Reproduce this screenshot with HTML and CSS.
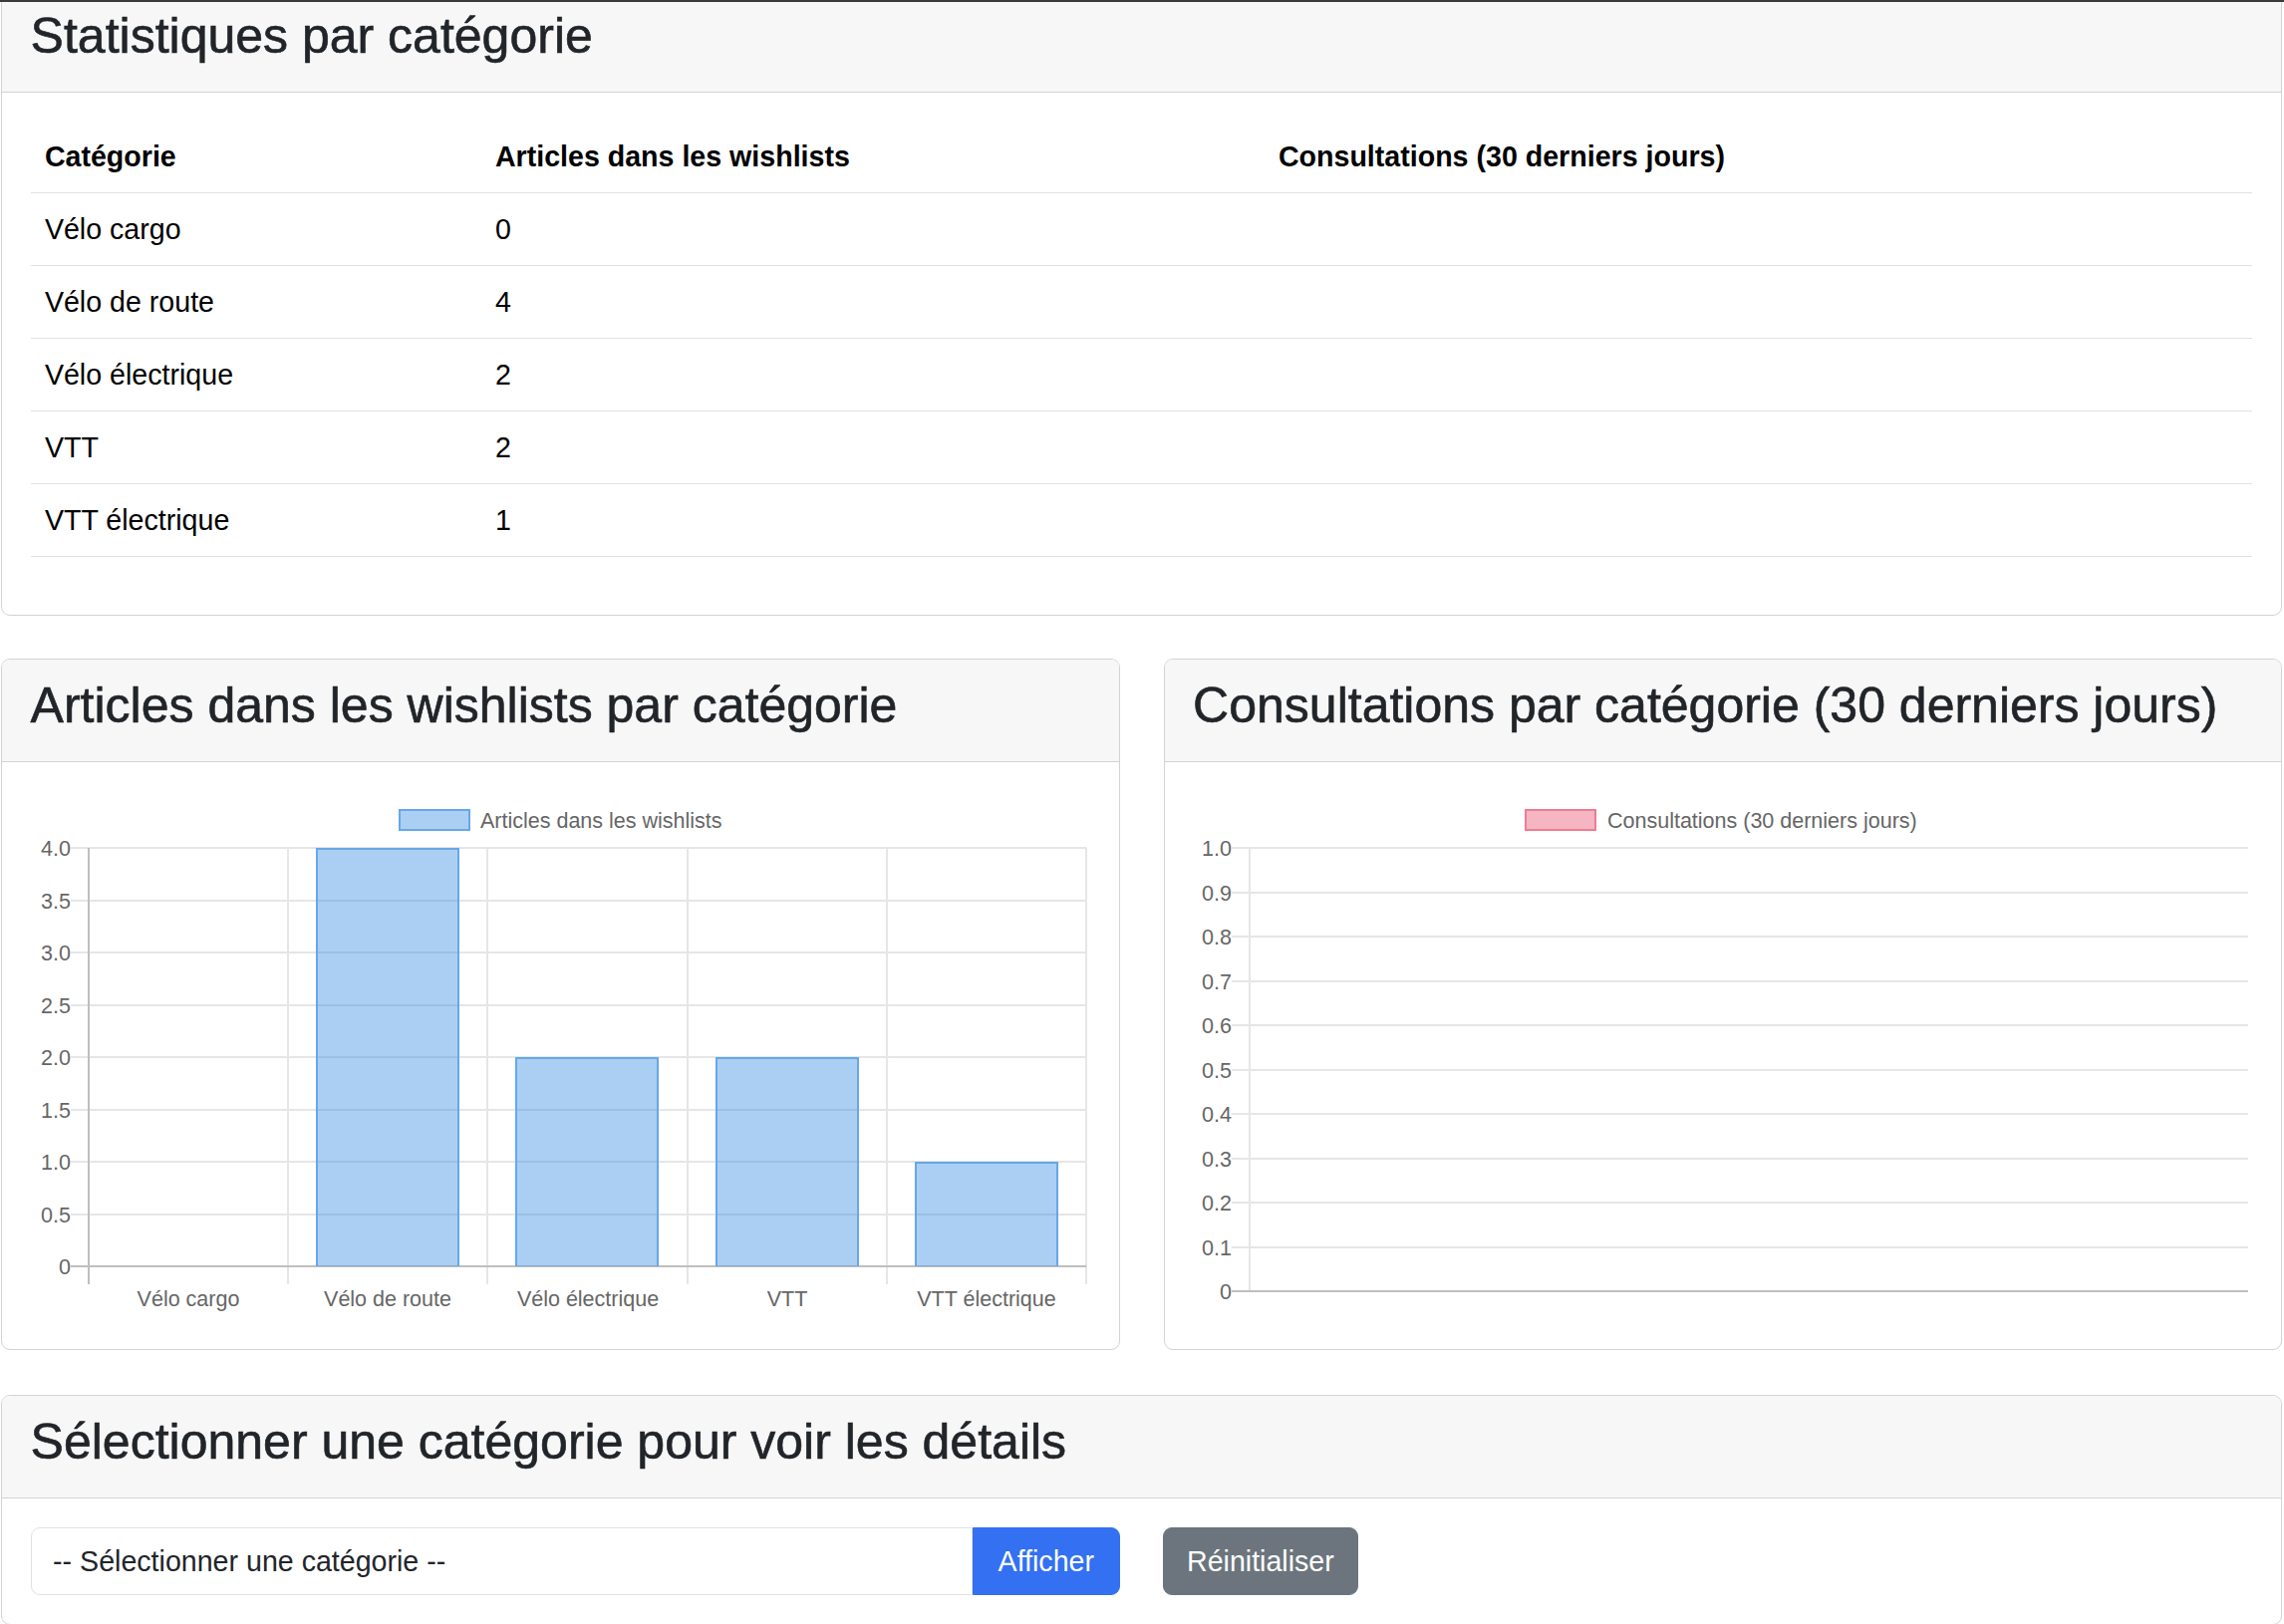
FILE: index.html
```html
<!DOCTYPE html>
<html lang="fr">
<head>
<meta charset="utf-8">
<title>Statistiques par catégorie</title>
<link rel="stylesheet" href="styles.css">
</head>
<body>
<div class="topline"></div>
<main class="page">
  <section class="card card-first">
    <div class="card-header"><h3>Statistiques par catégorie</h3></div>
    <div class="card-body">
      <table class="table">
        <thead>
          <tr><th class="c1">Catégorie</th><th class="c2">Articles dans les wishlists</th><th>Consultations (30 derniers jours)</th></tr>
        </thead>
        <tbody>
          <tr><td>Vélo cargo</td><td>0</td><td></td></tr>
          <tr><td>Vélo de route</td><td>4</td><td></td></tr>
          <tr><td>Vélo électrique</td><td>2</td><td></td></tr>
          <tr><td>VTT</td><td>2</td><td></td></tr>
          <tr><td>VTT électrique</td><td>1</td><td></td></tr>
        </tbody>
      </table>
    </div>
  </section>

  <div class="chart-row">
    <section class="card">
      <div class="card-header"><h3>Articles dans les wishlists par catégorie</h3></div>
      <div class="card-body">
        <svg class="chart" width="1063" height="531" xmlns="http://www.w3.org/2000/svg">
          <g class="legend">
            <rect x="370" y="19" width="70" height="20" fill="#aacff2" stroke="#66a7e9" stroke-width="2"/>
            <text x="451" y="30" class="lbl" dominant-baseline="central">Articles dans les wishlists</text>
          </g>
          <g stroke="#e6e6e6" stroke-width="2">
            <line x1="40" y1="57" x2="1059" y2="57"/>
            <line x1="40" y1="110" x2="1059" y2="110"/>
            <line x1="40" y1="162" x2="1059" y2="162"/>
            <line x1="40" y1="215" x2="1059" y2="215"/>
            <line x1="40" y1="267" x2="1059" y2="267"/>
            <line x1="40" y1="320" x2="1059" y2="320"/>
            <line x1="40" y1="372" x2="1059" y2="372"/>
            <line x1="40" y1="425" x2="1059" y2="425"/>
            <line x1="258" y1="57" x2="258" y2="495"/>
            <line x1="458" y1="57" x2="458" y2="495"/>
            <line x1="659" y1="57" x2="659" y2="495"/>
            <line x1="859" y1="57" x2="859" y2="495"/>
            <line x1="1059" y1="57" x2="1059" y2="495"/>
          </g>
          <g stroke="#bfbfbf" stroke-width="2">
            <line x1="58" y1="57" x2="58" y2="495"/>
            <line x1="40" y1="477" x2="1059" y2="477"/>
          </g>
          <g class="bars">
            <rect x="286" y="57" width="144" height="420" fill="rgba(54,140,225,0.42)"/>
            <path d="M287 477 V58 H429 V477" fill="none" stroke="#66a7e9" stroke-width="2"/>
            <rect x="486" y="267" width="144" height="210" fill="rgba(54,140,225,0.42)"/>
            <path d="M487 477 V268 H629 V477" fill="none" stroke="#66a7e9" stroke-width="2"/>
            <rect x="687" y="267" width="144" height="210" fill="rgba(54,140,225,0.42)"/>
            <path d="M688 477 V268 H830 V477" fill="none" stroke="#66a7e9" stroke-width="2"/>
            <rect x="887" y="372" width="144" height="105" fill="rgba(54,140,225,0.42)"/>
            <path d="M888 477 V373 H1030 V477" fill="none" stroke="#66a7e9" stroke-width="2"/>
          </g>
          <g class="lbl" text-anchor="end" dominant-baseline="central">
            <text x="40" y="58">4.0</text>
            <text x="40" y="111">3.5</text>
            <text x="40" y="163">3.0</text>
            <text x="40" y="216">2.5</text>
            <text x="40" y="268">2.0</text>
            <text x="40" y="321">1.5</text>
            <text x="40" y="373">1.0</text>
            <text x="40" y="426">0.5</text>
            <text x="40" y="478">0</text>
          </g>
          <g class="lbl" text-anchor="middle" dominant-baseline="central">
            <text x="158" y="510">Vélo cargo</text>
            <text x="358" y="510">Vélo de route</text>
            <text x="559" y="510">Vélo électrique</text>
            <text x="759" y="510">VTT</text>
            <text x="959" y="510">VTT électrique</text>
          </g>
        </svg>
      </div>
    </section>

    <section class="card">
      <div class="card-header"><h3>Consultations par catégorie (30 derniers jours)</h3></div>
      <div class="card-body">
        <svg class="chart" width="1063" height="531" xmlns="http://www.w3.org/2000/svg">
          <g class="legend">
            <rect x="334" y="19" width="70" height="20" fill="#f6b5c2" stroke="#ee7c93" stroke-width="2"/>
            <text x="416" y="30" class="lbl" dominant-baseline="central">Consultations (30 derniers jours)</text>
          </g>
          <g stroke="#e6e6e6" stroke-width="2">
            <line x1="39" y1="57" x2="1059" y2="57"/>
            <line x1="39" y1="102" x2="1059" y2="102"/>
            <line x1="39" y1="146" x2="1059" y2="146"/>
            <line x1="39" y1="191" x2="1059" y2="191"/>
            <line x1="39" y1="235" x2="1059" y2="235"/>
            <line x1="39" y1="280" x2="1059" y2="280"/>
            <line x1="39" y1="324" x2="1059" y2="324"/>
            <line x1="39" y1="369" x2="1059" y2="369"/>
            <line x1="39" y1="413" x2="1059" y2="413"/>
            <line x1="39" y1="458" x2="1059" y2="458"/>
            <line x1="57" y1="57" x2="57" y2="502"/>
          </g>
          <line x1="39" y1="502" x2="1059" y2="502" stroke="#bfbfbf" stroke-width="2"/>
          <g class="lbl" text-anchor="end" dominant-baseline="central">
            <text x="39" y="58">1.0</text>
            <text x="39" y="103">0.9</text>
            <text x="39" y="147">0.8</text>
            <text x="39" y="192">0.7</text>
            <text x="39" y="236">0.6</text>
            <text x="39" y="281">0.5</text>
            <text x="39" y="325">0.4</text>
            <text x="39" y="370">0.3</text>
            <text x="39" y="414">0.2</text>
            <text x="39" y="459">0.1</text>
            <text x="39" y="503">0</text>
          </g>
        </svg>
      </div>
    </section>
  </div>

  <section class="card card-last">
    <div class="card-header"><h3>Sélectionner une catégorie pour voir les détails</h3></div>
    <div class="card-body">
      <div class="form-row">
        <div class="input-group">
          <select class="form-select">
            <option>-- Sélectionner une catégorie --</option>
            <option>Vélo cargo</option>
            <option>Vélo de route</option>
            <option>Vélo électrique</option>
            <option>VTT</option>
            <option>VTT électrique</option>
          </select>
          <button class="btn btn-primary" type="button">Afficher</button>
        </div>
        <div>
          <button class="btn btn-secondary" type="button">Réinitialiser</button>
        </div>
      </div>
    </div>
  </section>
</main>
</body>
</html>
```

FILE: styles.css
```css
* {
  box-sizing: border-box;
}

html,
body {
  margin: 0;
  padding: 0;
  background: #fff;
  overflow: hidden;
}

body {
  font-family: "Liberation Sans", Arial, Helvetica, sans-serif;
  font-size: 28.6px;
  line-height: 1.5;
  color: #212529;
}

.topline {
  position: fixed;
  top: 0;
  left: 0;
  right: 0;
  height: 2px;
  background: #3a3a3c;
  z-index: 10;
}

.page {
  padding: 0 2px 0 1px;
  margin-top: -12px;
}

.card {
  border: 1px solid #d3d3d3;
  border-radius: 9px;
  background: #fff;
  overflow: hidden;
  margin-bottom: 43px;
}

.card-header {
  background: #f7f7f7;
  border-bottom: 1px solid #d3d3d3;
  padding: 16.5px 28.6px 14.3px;
}

.card-header h3 {
  margin: 0 0 12.1px;
  font-size: 50px;
  font-weight: 400;
  line-height: 1.2;
  color: #212529;
  -webkit-text-stroke: 0.6px #212529;
}

.card-body {
  padding: 28.6px;
}

.table {
  width: 100%;
  border-collapse: collapse;
  table-layout: fixed;
  margin-bottom: 29px;
  color: #000;
}

.table th,
.table td {
  padding: 14.5px 14.3px 14.5px;
  line-height: 42.9px;
  border-bottom: 1px solid #dee2e6;
  text-align: left;
  vertical-align: top;
}

.table th {
  font-weight: 700;
}

.c1 {
  width: 452px;
}

.c2 {
  width: 786px;
}

.chart-row {
  display: grid;
  grid-template-columns: 1fr 1fr;
  gap: 44px;
  margin-bottom: 45px;
}

.chart-row .card {
  margin-bottom: 0;
}

.chart {
  display: block;
}

.lbl {
  font-family: "Liberation Sans", Arial, Helvetica, sans-serif;
  font-size: 21.5px;
  fill: #666;
}

.form-row {
  display: grid;
  grid-template-columns: 1fr 1fr;
  gap: 43px;
}

.input-group {
  display: flex;
}

.form-select {
  flex: 1;
  height: 68px;
  font-family: inherit;
  font-size: 28.6px;
  line-height: 42.9px;
  padding: 10px 21.5px;
  border: 1px solid #dee2e6;
  border-radius: 9px 0 0 9px;
  background: #fff;
  color: #212529;
  appearance: none;
  -webkit-appearance: none;
}

.btn {
  height: 68px;
  font-family: inherit;
  font-size: 28.6px;
  line-height: 42.9px;
  padding: 10px 23px;
  border: 1px solid transparent;
  border-radius: 9px;
  color: #fff;
}

.btn-primary {
  background: #3370f2;
  border-color: #3370f2;
  border-radius: 0 9px 9px 0;
  padding: 10px 25px;
}

.btn-secondary {
  background: #6c757d;
  border-color: #6c757d;
}
```
